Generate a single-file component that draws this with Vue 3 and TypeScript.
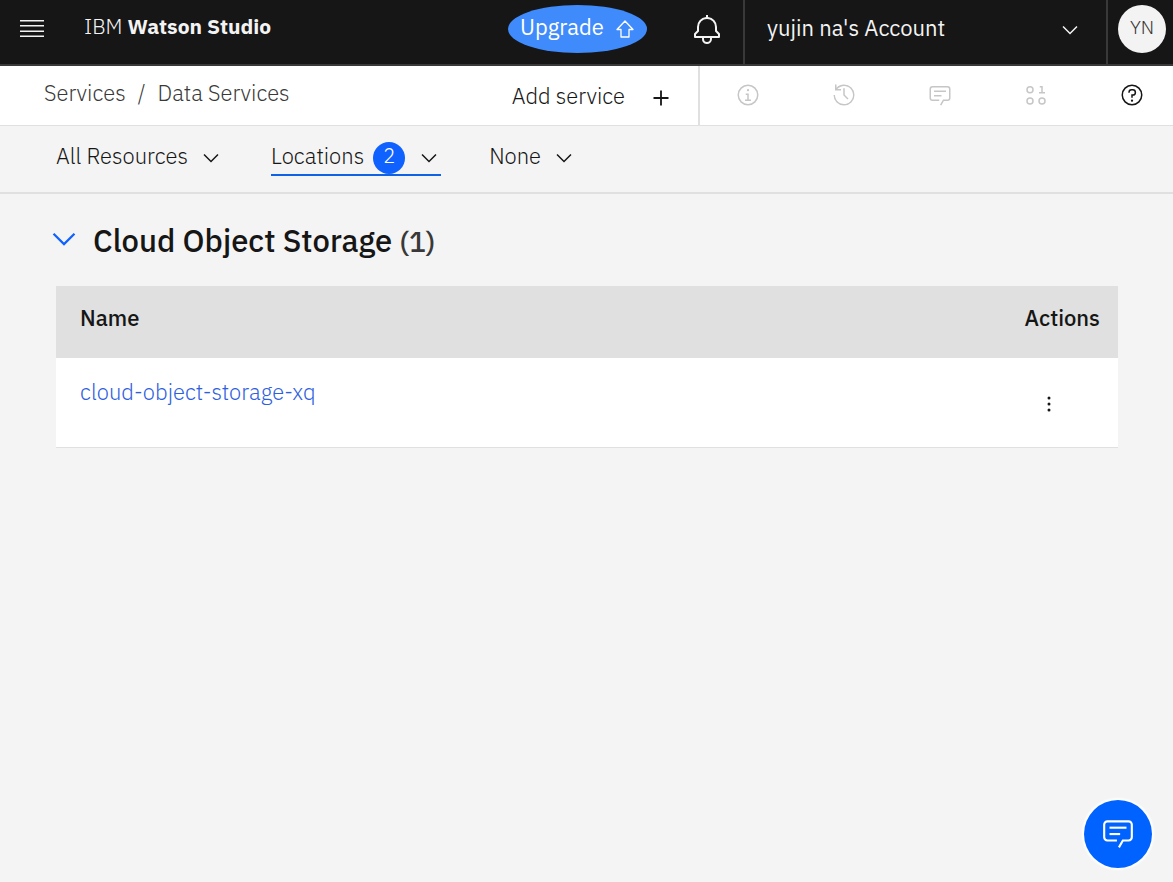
<script setup lang="ts">
import { ref } from 'vue'

interface Tool {
  label: string
  active: boolean
  paths: string[]
}

interface Service {
  name: string
}

const ring = 'M16 2a14 14 0 1 0 14 14A14 14 0 0 0 16 2Zm0 26a12 12 0 1 1 12-12A12 12 0 0 1 16 28Z'
const chatPaths = [
  'M17.74 30 16 29l4-7h6a2 2 0 0 0 2-2V8a2 2 0 0 0-2-2H6a2 2 0 0 0-2 2v12a2 2 0 0 0 2 2h9v2H6a4 4 0 0 1-4-4V8a4 4 0 0 1 4-4h20a4 4 0 0 1 4 4v12a4 4 0 0 1-4 4h-4.84Z',
  'M8 10h16v2H8z',
  'M8 16h10v2H8z'
]

const tools: Tool[] = [
  {
    label: 'Information',
    active: false,
    paths: [ring, 'M17 22v-8h-4v2h2v6h-3v2h8v-2z', 'M16 8a1.5 1.5 0 1 0 1.5 1.5A1.5 1.5 0 0 0 16 8Z']
  },
  {
    label: 'History',
    active: false,
    paths: [
      'M20.59 22 15 16.41V7h2v8.58l5 5.01z',
      'M16 2A13.94 13.94 0 0 0 6 6.23V2H4v8h8V8H7.08A12 12 0 1 1 4 16H2A14 14 0 1 0 16 2Z'
    ]
  },
  { label: 'Comments', active: false, paths: chatPaths },
  {
    label: 'Data',
    active: false,
    paths: [
      'M8 4a5 5 0 1 0 5 5 5 5 0 0 0-5-5Zm0 8a3 3 0 1 1 3-3 3 3 0 0 1-3 3Z',
      'M8 19a5 5 0 1 0 5 5 5 5 0 0 0-5-5Zm0 8a3 3 0 1 1 3-3 3 3 0 0 1-3 3Z',
      'M24 19a5 5 0 1 0 5 5 5 5 0 0 0-5-5Zm0 8a3 3 0 1 1 3-3 3 3 0 0 1-3 3Z',
      'M25 12V4h-4v2h2v6h-3v2h8v-2z'
    ]
  },
  {
    label: 'Help',
    active: true,
    paths: [
      ring,
      'M17 8h-1.5a4.49 4.49 0 0 0-4.5 4.5v.5h2v-.5a2.5 2.5 0 0 1 2.5-2.5H17a2.5 2.5 0 0 1 0 5h-2v4.5h2V17a4.5 4.5 0 0 0 0-9Z',
      'M16 22a1.5 1.5 0 1 0 1.5 1.5A1.5 1.5 0 0 0 16 22Z'
    ]
  }
]

const filters = [
  { label: 'All Resources', count: 0 },
  { label: 'Locations', count: 2 },
  { label: 'None', count: 0 }
]

const services = ref<Service[]>([{ name: 'cloud-object-storage-xq' }])
const expanded = ref(true)
</script>

<template>
  <div class="page">
    <header class="topbar">
      <button class="menu" type="button" aria-label="Menu">
        <svg width="24" height="20" viewBox="0 0 24 20" fill="currentColor">
          <path d="M0 1h24v1.600H0zM0 6h24v1.600H0zM0 11.400h24V13H0zM0 16.400h24V18H0z" />
        </svg>
      </button>
      <a class="brand" href="#">IBM <b>Watson Studio</b></a>
      <button class="upgrade" type="button">
        <span>Upgrade</span>
        <svg width="20" height="20" viewBox="0 0 20 20" fill="none" stroke="currentColor" stroke-width="1.3" stroke-linejoin="round">
          <path d="M10 2 2 10.5h4V18h8v-7.500h4Z" />
        </svg>
      </button>
      <button class="bell" type="button" aria-label="Notifications">
        <svg width="32" height="32" viewBox="0 0 32 32" fill="currentColor">
          <path d="M28.7 19.3 26 16.59V13a10 10 0 0 0-9-9.950V1h-2v2.050A10 10 0 0 0 6 13v3.590L3.300 19.300A1 1 0 0 0 3 20v3a1 1 0 0 0 1 1h7v.780a5.150 5.150 0 0 0 4.500 5.200A5 5 0 0 0 21 25v-1h7a1 1 0 0 0 1-1v-3a1 1 0 0 0-.300-.700ZM19 25a3 3 0 0 1-6 0v-1h6Zm8-3H5v-1.590l2.710-2.700A1 1 0 0 0 8 17v-4a8 8 0 0 1 16 0v4a1 1 0 0 0 .290.710L27 20.410Z" />
        </svg>
      </button>
      <button class="account" type="button">
        <span>yujin na's Account</span>
        <svg width="24" height="24" viewBox="0 0 16 16" fill="currentColor"><path d="M8 11 3 6l.7-.7L8 9.600l4.300-4.300.7.7z" /></svg>
      </button>
      <div class="profile">
        <button class="avatar" type="button" aria-label="Profile">YN</button>
      </div>
    </header>

    <div class="subbar">
      <nav class="crumbs" aria-label="Breadcrumb">
        <a href="#">Services</a><span class="slash">/</span><a href="#">Data Services</a>
      </nav>
      <button class="add" type="button">
        <span>Add service</span>
        <svg width="24" height="24" viewBox="0 0 32 32" fill="currentColor"><path d="M17.200 14.800V6h-2.400v8.800H6v2.400h8.800V26h2.400v-8.800H26v-2.400z" /></svg>
      </button>
      <div class="tools">
        <button v-for="tool in tools" :key="tool.label" class="tool" :class="{ active: tool.active }" type="button" :aria-label="tool.label">
          <svg width="24" height="24" viewBox="0 0 32 32" fill="currentColor">
            <path v-for="p in tool.paths" :key="p" :d="p" />
          </svg>
        </button>
      </div>
    </div>

    <div class="filters">
      <button v-for="f in filters" :key="f.label" class="filter" :class="{ selected: f.count > 0 }" type="button">
        <span class="name">{{ f.label }}</span>
        <span v-if="f.count" class="count">{{ f.count }}</span>
        <svg width="24" height="24" viewBox="0 0 16 16" fill="currentColor"><path d="M8 11 3 6l.7-.7L8 9.600l4.300-4.300.7.7z" /></svg>
      </button>
    </div>

    <main class="content">
      <h2 class="heading">
        <button class="toggle" type="button" aria-label="Toggle section" :aria-expanded="expanded" @click="expanded = !expanded">
          <svg width="36" height="36" viewBox="0 0 32 32" fill="currentColor"><path d="M16 22 6 12l1.400-1.400 8.600 8.600 8.600-8.600L26 12z" /></svg>
        </button>
        <span>Cloud Object Storage <span class="total">({{ services.length }})</span></span>
      </h2>
      <table v-if="expanded" class="grid">
        <thead>
          <tr><th scope="col">Name</th><th class="actions" scope="col">Actions</th></tr>
        </thead>
        <tbody>
          <tr v-for="s in services" :key="s.name">
            <td><a href="#">{{ s.name }}</a></td>
            <td class="actions">
              <button class="more" type="button" aria-label="Actions">
                <svg width="24" height="24" viewBox="0 0 32 32" fill="currentColor">
                  <circle cx="16" cy="8" r="2" /><circle cx="16" cy="16" r="2" /><circle cx="16" cy="24" r="2" />
                </svg>
              </button>
            </td>
          </tr>
        </tbody>
      </table>
    </main>

    <button class="chat" type="button" aria-label="Chat">
      <svg width="34" height="34" viewBox="0 0 32 32" fill="currentColor">
        <path v-for="p in chatPaths" :key="p" :d="p" />
      </svg>
    </button>
  </div>
</template>

<style>
body {
  background: #f4f4f4;
}
</style>

<style scoped>
.page {
  min-height: 100vh;
  background: #f4f4f4;
  color: #161616;
  font-family: "IBM Plex Sans", Roboto, "Liberation Sans", sans-serif;
  font-size: 22px;
  font-weight: 300;
  line-height: 28px;
}
.page * {
  box-sizing: border-box;
}
button {
  display: flex;
  align-items: center;
  padding: 0;
  border: 0;
  background: none;
  color: inherit;
  font: inherit;
  white-space: nowrap;
  cursor: pointer;
}
a {
  color: inherit;
  text-decoration: none;
}
svg {
  display: block;
  flex: none;
}
.topbar {
  display: flex;
  align-items: stretch;
  height: 66px;
  background: #161616;
  border-bottom: 2px solid #393939;
  color: #f3f3f3;
}
.menu {
  align-items: flex-start;
  justify-content: center;
  width: 64px;
  padding-top: 19px;
}
.brand {
  flex: 1;
  padding: 12px 0 0 20px;
  font-size: 21px;
  white-space: nowrap;
}
.brand b {
  font-weight: 700;
}
.upgrade {
  justify-content: space-between;
  width: 139px;
  height: 48px;
  margin-top: 5px;
  padding: 0 12px;
  border-radius: 50%;
  background: #408bfc;
  color: #fff;
  font-weight: 400;
}
.upgrade span {
  padding-bottom: 4px;
}
.bell {
  justify-content: center;
  width: 96px;
  padding-left: 24px;
  padding-bottom: 4px;
}
.account {
  justify-content: space-between;
  width: 365px;
  padding: 0 24px 8px 22px;
  border: solid #393939;
  border-width: 0 2px;
  font-weight: 400;
}
.account svg {
  margin-top: 4px;
}
.profile {
  padding: 5px 7px 0 10px;
}
.avatar {
  justify-content: center;
  width: 48px;
  height: 48px;
  padding-bottom: 4px;
  border-radius: 50%;
  background: #f3f3f3;
  color: #393939;
  font-size: 19px;
}
.subbar {
  display: flex;
  align-items: stretch;
  height: 60px;
  background: #fff;
  border-bottom: 1px solid #e0e0e0;
}
.crumbs {
  flex: 1;
  padding: 13px 0 0 44px;
  color: #393939;
  white-space: nowrap;
}
.slash {
  padding: 0 12px;
}
.add {
  gap: 24px;
  padding-right: 25px;
}
.add svg {
  margin-top: 4px;
}
.tools {
  display: flex;
  align-items: center;
  gap: 72px;
  padding: 0 29px 2px 36px;
  border-left: 2px solid #e0e0e0;
}
.tool {
  color: #c6c6c6;
}
.tool.active {
  color: #161616;
}
.filters {
  display: flex;
  align-items: flex-start;
  gap: 48px;
  height: 68px;
  padding: 14px 50px 0 56px;
  border-bottom: 2px solid #e0e0e0;
}
.filter {
  gap: 11px;
  height: 36px;
  border-bottom: 2px solid transparent;
}
.filter .name {
  padding-bottom: 2px;
}
.filter svg {
  margin-top: 2px;
}
.filter.selected {
  gap: 9px;
  border-color: #1062e4;
}
.filter.selected svg {
  margin-left: 3px;
}
.count {
  width: 32px;
  height: 32px;
  margin-top: 2px;
  border-radius: 50%;
  background: #0f62fe;
  color: #fff;
  font-size: 20px;
  line-height: 28px;
}
.content {
  padding: 26px 55px 0 56px;
}
.heading {
  display: flex;
  align-items: center;
  gap: 11px;
  margin: 0 0 24px -10px;
  font-size: 31px;
  font-weight: 500;
  line-height: 42px;
}
.toggle {
  padding-bottom: 4px;
  color: #1062fe;
}
.total {
  color: #393939;
  font-size: 28px;
  line-height: 28px;
}
.grid {
  width: 100%;
  border-spacing: 0;
  text-align: left;
}
.grid th,
.grid td {
  padding: 18px 24px 0;
  vertical-align: top;
}
.grid th {
  height: 72px;
  background: #e0e0e0;
  font-weight: 500;
}
.grid td {
  height: 90px;
  padding-top: 20px;
  background: #fff;
  border-bottom: 1px solid #e0e0e0;
  color: #2d60e0;
}
.grid .actions {
  width: 117px;
  padding-right: 18px;
}
.grid td.actions {
  padding-top: 34px;
}
.more {
  margin-left: 13px;
  color: #161616;
}
.chat {
  position: fixed;
  right: 21px;
  bottom: 14px;
  justify-content: center;
  width: 68px;
  height: 68px;
  padding-bottom: 2px;
  border-radius: 50%;
  background: #0062ff;
  box-shadow: 0 0 2px 2px #fff;
  color: #fff;
}
</style>
